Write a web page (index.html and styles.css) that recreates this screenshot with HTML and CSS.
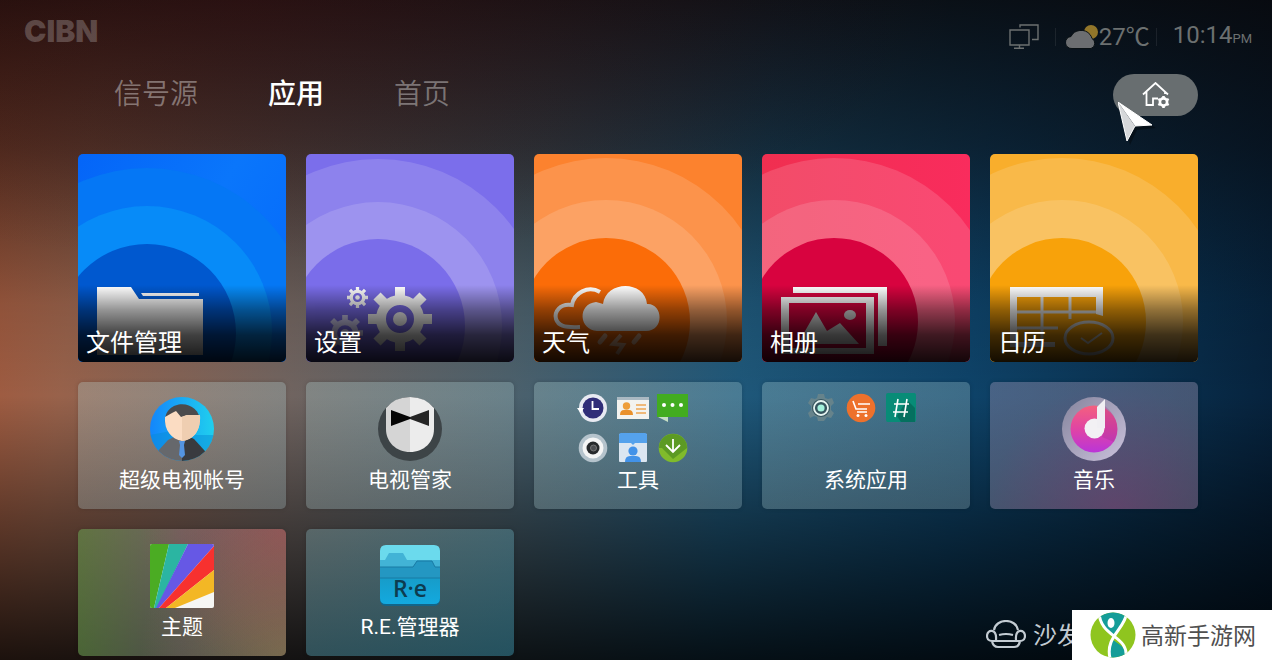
FILE: index.html
```html
<!DOCTYPE html>
<html lang="zh-CN">

<head>
    <meta charset="UTF-8" />
    <meta name="viewport" content="width=device-width, initial-scale=1.0" />
    <title>应用</title>
    <link rel="stylesheet" href="styles.css">
</head>

<body>
    <svg class="defs" width="0" height="0" aria-hidden="true">
        <symbol id="gear" viewBox="-32 -32 64 64">
            <path d="M0-32V-21M0 21V32M-32 0H-21M21 0H32M-23-23L-15-15M23-23L15-15M-23 23L-15 15M23 23L15 15" stroke="currentColor" stroke-width="10" fill="none" />
            <circle r="19" fill="none" stroke="currentColor" stroke-width="10" />
            <circle r="7" fill="currentColor" />
        </symbol>
    </svg>

    <header class="header">
        <div class="logo">CIBN</div>
        <div class="status">
            <svg class="icon-screens" width="30" height="26" viewBox="0 0 30 26" fill="none" stroke="currentColor" stroke-width="1.4">
                <path d="M1 6H20V21H1ZM10.500 21V24M5 24.300H15M11 3.500V1H29V15.500H23" />
            </svg>
            <span class="line"></span>
            <div class="weather">
                <svg width="33" height="26" viewBox="0 0 33 26">
                    <circle cx="25" cy="8" r="7" fill="#92762a" />
                    <path d="M6 24.500a6 6 0 0 1-1-12 11 10 0 0 1 19-2q1.500 2 2 4a5.500 5.500 0 0 1-1 10Z" fill="#6c6e71" stroke="#091013" stroke-width="1" />
                </svg>
                <span>27℃</span>
            </div>
            <span class="line"></span>
            <div class="clock">10:14<small>PM</small></div>
        </div>
    </header>

    <nav class="nav">
        <a href="#">信号源</a>
        <a href="#" class="active">应用</a>
        <a href="#">首页</a>
        <button class="btn-home" aria-label="桌面设置">
            <svg width="28" height="26" viewBox="0 0 28 26" fill="none" stroke="#fff" stroke-width="1.8">
                <path d="M1 12.500L13.500 1L26 12.500M4.500 10V23H11V16.500H16M23 10V12" />
                <circle cx="21.500" cy="20" r="3.600" stroke-width="2.600" />
                <path d="M21.500 14V16M21.500 24V26M16.300 17L18 18M25 22L26.700 23M16.300 23L18 22M25 18L26.700 17" stroke-width="2.600" />
            </svg>
        </button>
        <svg class="cursor" width="40" height="44" viewBox="0 0 40 44">
            <path d="M2 3L38 26L19 28L12 43Z" fill="#000" opacity=".35" />
            <path d="M0 0L34 23L17 24Z" fill="#fff" />
            <path d="M0 0L17 24L9 39Z" fill="#d6d8da" />
            <path d="M0 0L34 23L17 24L9 39Z" fill="none" stroke="#fff" stroke-width="1" />
        </svg>
    </nav>

    <main class="grid">
        <a href="#" class="tile blue">
            <svg class="art" viewBox="0 0 208 208">
                <circle class="c1" cx="69" cy="179" r="165" />
                <circle class="c2" cx="69" cy="177" r="125" />
                <circle class="c3" cx="69" cy="179" r="89" />
                <path d="M19 133H53L61 145H125V201H19ZM63 139H121V142H65Z" fill="#fff" />
            </svg>
            <span class="name">文件管理</span>
        </a>
        <a href="#" class="tile purple">
            <svg class="art" viewBox="0 0 208 208">
                <circle class="c1" cx="72" cy="172" r="167" />
                <circle class="c2" cx="72" cy="172" r="124" />
                <circle class="c3" cx="72" cy="172" r="87" />
                <g color="#fff">
                    <use href="#gear" x="62" y="133" width="64" height="64" />
                    <use href="#gear" x="41" y="133" width="21" height="21" />
                    <use href="#gear" x="21" y="161" width="36" height="36" opacity=".7" />
                </g>
            </svg>
            <span class="name">设置</span>
        </a>
        <a href="#" class="tile orange">
            <svg class="art" viewBox="0 0 208 208">
                <circle class="c1" cx="72" cy="168" r="164" />
                <circle class="c2" cx="72" cy="167" r="121" />
                <circle class="c3" cx="72" cy="168" r="84" />
                <path d="M66 138C54 131 40 139 38 151C26 149 20 158 22 165C24 171 29 174 46 173" fill="none" stroke="#fff" stroke-width="4" />
                <path d="M63 177C45 176 43 150 62 148Q66 149 69 150C72 126 111 126 113 150C129 149 131 177 112 177Z" fill="#fff" />
                <path d="M71 182L66 188M105 182L100 188" stroke="#fff" stroke-width="5" stroke-linecap="round" opacity=".6" />
                <path d="M87 181L79 190L89 191L83 200" fill="none" stroke="#fff" stroke-width="4" opacity=".6" />
            </svg>
            <span class="name">天气</span>
        </a>
        <a href="#" class="tile red">
            <svg class="art" viewBox="0 0 208 208">
                <circle class="c1" cx="72" cy="168" r="164" />
                <circle class="c2" cx="72" cy="167" r="121" />
                <circle class="c3" cx="72" cy="168" r="84" />
                <path d="M31 133H125V192H116V139H31ZM19 143H112V200H19ZM27 149V194H104V149Z" fill="#fff" fill-rule="evenodd" />
                <path d="M39 184L54 158L65 177L78 169L97 190H39Z" fill="#ddd" />
                <ellipse cx="88" cy="161" rx="6" ry="5" fill="#ddd" />
            </svg>
            <span class="name">相册</span>
        </a>
        <a href="#" class="tile yellow">
            <svg class="art" viewBox="0 0 208 208">
                <circle class="c1" cx="72" cy="168" r="164" />
                <circle class="c2" cx="72" cy="167" r="121" />
                <circle class="c3" cx="72" cy="168" r="84" />
                <path d="M20 133H113V162L106 160V143H27V188H65V193H20Z" fill="#fff" />
                <path d="M52 143V190M80 143V165M27 158H106M27 174H68" fill="none" stroke="#ddd" stroke-width="3" />
                <ellipse cx="99" cy="184" rx="24" ry="16" fill="none" stroke="#ddd" stroke-width="3" />
                <path d="M91 184L98 189L112 179" fill="none" stroke="#ddd" stroke-width="2" />
            </svg>
            <span class="name">日历</span>
        </a>

        <a href="#" class="app">
            <svg class="app-icon" viewBox="0 0 64 64">
                <defs>
                    <linearGradient id="sky" x1="0" x2="1">
                        <stop offset="0" stop-color="#1386fb" />
                        <stop offset="1" stop-color="#20cfee" />
                    </linearGradient>
                    <clipPath id="round"><circle cx="32" cy="32" r="32" /></clipPath>
                </defs>
                <g clip-path="url(#round)">
                    <rect width="64" height="64" fill="url(#sky)" />
                    <path d="M0 38L32 32L8 56L0 50ZM64 38L36 38L56 54L64 48Z" fill="#078bd5" opacity=".5" />
                    <path d="M32 36L18 43L8 54V64H32Z" fill="#66686c" />
                    <path d="M32 36L44 42L55 54V64H32Z" fill="#393b3f" />
                    <path d="M15 26C13 1 51 1 50 26L44 30H20Z" fill="#4b4b4d" />
                    <path d="M15 20L22 16L26 14L31 20L37 18H50C51 34 43 43 32 44C22 42 14 34 15 20Z" fill="#fbdcc2" />
                    <path d="M32 20L37 18H50C51 34 43 43 32 44Z" fill="#efceb1" />
                    <path d="M29 44H35L34 48L35 58L32 61L29 58L30 48Z" fill="#5494e0" />
                </g>
            </svg>
            <span class="app-name">超级电视帐号</span>
        </a>
        <a href="#" class="app">
            <svg class="app-icon" viewBox="0 0 64 64">
                <circle cx="32" cy="32" r="32" fill="#3d4447" />
                <path d="M8 11Q17 0 32 0V55C18 55 8 45 8 32Z" fill="#d5d5d5" />
                <path d="M56 11Q47 0 32 0V55C46 55 56 45 56 32Z" fill="#ececec" />
                <path d="M13 13L32 20V22L13 29Z" fill="#050505" />
                <path d="M51 13L32 20V22L51 29Z" fill="#262626" />
            </svg>
            <span class="app-name">电视管家</span>
        </a>
        <a href="#" class="app">
            <span class="folder">
                <svg viewBox="0 0 30 30">
                    <circle cx="15" cy="15" r="14" fill="#e8eaf2" />
                    <circle cx="15" cy="15" r="10.500" fill="#302d78" />
                    <path d="M14.500 8V16H21" fill="none" stroke="#fff" stroke-width="1.800" />
                    <path d="M-1 15H6L2.500 20Z" fill="#fff" />
                </svg>
                <svg viewBox="0 0 30 30">
                    <path d="M-1 4H31V26H-1Z" fill="#f3f3ef" />
                    <path d="M-1 4H31V7H-1Z" fill="#aab9c2" />
                    <circle cx="8.500" cy="13" r="3.700" fill="#ee9e3a" />
                    <path d="M2 22Q2 17 6 17H11Q15 17 15 22Z" fill="#e9912c" />
                    <path d="M18 12H28M18 16H28M18 20H28" stroke="#eea653" stroke-width="1.500" />
                </svg>
                <svg viewBox="0 0 30 30">
                    <path d="M0 24H10V29Z" fill="#c6dfc5" />
                    <path d="M-1 1H30V24H-1Z" fill="#42ac20" />
                    <circle cx="6" cy="12" r="2" fill="#fff" />
                    <circle cx="14.500" cy="12" r="2" fill="#fff" />
                    <circle cx="23" cy="12" r="2" fill="#fff" />
                </svg>
                <svg viewBox="0 0 30 30">
                    <circle cx="15" cy="15" r="14.300" fill="#b5c3cc" />
                    <circle cx="15" cy="15" r="10.500" fill="#f5f5f5" />
                    <circle cx="15" cy="15" r="6.500" fill="#27292b" />
                    <circle cx="15.500" cy="15" r="3" fill="#4c4d50" stroke="#777" />
                </svg>
                <svg viewBox="0 0 30 30">
                    <rect x="1" y="1" width="28" height="28" rx="1" fill="#dbe6f1" />
                    <path d="M1 2Q1 0 3 0H27Q29 0 29 2V10H17L15 12L13 10H1Z" fill="#55a2ec" />
                    <circle cx="15" cy="18" r="4.600" fill="#4292e8" />
                    <path d="M7 29Q7 23 12 23H18Q23 23 23 29Z" fill="#4292e8" />
                </svg>
                <svg viewBox="0 0 30 30">
                    <circle cx="15" cy="15" r="14.300" fill="#80bb2b" />
                    <path d="M1 15A14 14 0 0 1 29 15L15 26L4 15Z" fill="#5c9a24" />
                    <path d="M15 6V18M8 12L15 19L22 12" fill="none" stroke="#fff" stroke-width="1.800" />
                </svg>
            </span>
            <span class="app-name">工具</span>
        </a>
        <a href="#" class="app">
            <span class="folder">
                <svg viewBox="0 0 30 30">
                    <path d="M12 1H18L19 5L22 6L26 5L28 10L25 13V17L28 20L25 25L21 24L18 28H12L11 24L8 23L4 25L2 20L5 17V13L2 10L5 5L9 6L11 5Z" fill="#66838b" />
                    <circle cx="15" cy="15" r="9" fill="#35545e" />
                    <circle cx="15" cy="15" r="7" fill="none" stroke="#e4f2ef" stroke-width="1.800" />
                    <circle cx="15" cy="15" r="3.600" fill="#a3f0db" />
                </svg>
                <svg viewBox="0 0 30 30">
                    <circle cx="15" cy="15" r="14.300" fill="#ed712c" />
                    <path d="M7 8L10 16H21M12 11H24M11 19H21" fill="none" stroke="#fff" stroke-width="1.600" />
                    <circle cx="12" cy="22.500" r="1.500" fill="#fff" />
                    <circle cx="20" cy="22.500" r="1.500" fill="#fff" />
                </svg>
                <svg viewBox="0 0 30 30">
                    <rect y="0" width="30" height="29" rx="2" fill="#088c77" />
                    <path d="M21 7L29 15V29H15L11 23Z" fill="#05705f" />
                    <path d="M12 6L9 24M21 6L18 24M8 11H23M7 19H22" stroke="#fff" stroke-width="1.600" />
                </svg>
            </span>
            <span class="app-name">系统应用</span>
        </a>
        <a href="#" class="app music">
            <svg class="app-icon" viewBox="0 0 64 64">
                <defs>
                    <linearGradient id="disc" x1="0" x2="0" y1="0" y2="1">
                        <stop offset="0" stop-color="#f4607e" />
                        <stop offset=".5" stop-color="#e044a4" />
                        <stop offset="1" stop-color="#ba35d8" />
                    </linearGradient>
                    <linearGradient id="rim" x1="0" x2="1" y1="0" y2="1">
                        <stop offset="0" stop-color="#85849c" />
                        <stop offset="1" stop-color="#cbc2dc" />
                    </linearGradient>
                </defs>
                <circle cx="32" cy="32" r="32" fill="url(#rim)" />
                <circle cx="32" cy="32" r="23.500" fill="url(#disc)" />
                <path d="M43 9V31L40 40L52 45Q56 38 55 28Q53 17 43 9Z" fill="#a32e91" opacity=".3" />
                <circle cx="32.500" cy="31.500" r="10" fill="#f2f1f4" />
                <path d="M35 10L43 2V31H35Z" fill="#f0eff3" />
            </svg>
            <span class="app-name">音乐</span>
        </a>
        <a href="#" class="app theme">
            <svg class="app-icon" viewBox="0 0 64 64">
                <defs><clipPath id="square"><rect width="64" height="64" rx="2" /></clipPath></defs>
                <g clip-path="url(#square)">
                    <rect width="64" height="64" fill="#f6f6f4" />
                    <path d="M0 0H19L4 64H0Z" fill="#4bac23" />
                    <path d="M19 0H38L7 64H4Z" fill="#2bb5a2" />
                    <path d="M38 0H64V2L9 64H6Z" fill="#6658e5" />
                    <path d="M64 2V26L16 64H9Z" fill="#f7312f" />
                    <path d="M64 26V48L25 64H16Z" fill="#f3b725" />
                </g>
            </svg>
            <span class="app-name">主题</span>
        </a>
        <a href="#" class="app manager">
            <svg class="app-icon" viewBox="0 0 64 64">
                <defs>
                    <linearGradient id="front" x1="0" x2="0" y1="0" y2="1">
                        <stop offset="0" stop-color="#179cc9" />
                        <stop offset="1" stop-color="#13a9df" />
                    </linearGradient>
                </defs>
                <rect x="2" y="2" width="60" height="60" rx="6" fill="#126589" />
                <path d="M2 7Q2 1 8 1H56Q62 1 62 7V17H2Z" fill="#6bdaed" />
                <path d="M2 16H7L11 9H25L29 16H62V34H2Z" fill="#42b3d6" />
                <path d="M2 23H35L39 17H54L57 23H62V34H2Z" fill="#2497c2" />
                <path d="M2 34H62V54Q62 60 56 60H8Q2 60 2 54Z" fill="url(#front)" />
                <path d="M2 23H35L39 17H54L57 23H62M2 34H62" fill="none" stroke="#197aa4" />
                <text class="re" x="32" y="53" text-anchor="middle">R·e</text>
            </svg>
            <span class="app-name">R.E.管理器</span>
        </a>
    </main>

    <footer class="marks">
        <svg width="40" height="30" viewBox="0 0 40 30" fill="none" stroke="currentColor" stroke-width="2.200">
            <path d="M8 10C10-2 30-2 32 10M10 20C11 8 1 9 1 16C1 21 6 21 6 21Q7 27 12 27H28Q33 27 34 21C34 21 39 21 39 16C39 9 29 8 30 20M13 15Q20 13 27 15M6 21H34" />
        </svg>
        <span class="shafa">沙发</span>
        <div class="badge">
            <svg width="46" height="46" viewBox="0 0 46 46">
                <defs><clipPath id="ball"><circle cx="23" cy="23" r="22.500" /></clipPath></defs>
                <g clip-path="url(#ball)">
                    <rect width="46" height="46" fill="#8fc51f" />
                    <path d="M9 0H36C35 10 29 17 23 23C15 18 9 10 9 0ZM23 28C32 34 39 38 33 46H20C18 39 19 33 23 28Z" fill="#159d98" />
                    <path d="M9 0C10 26 39 23 36 46M37 0C35 17 15 25 20 46" fill="none" stroke="#fff" stroke-width="3" />
                    <ellipse cx="21" cy="11" rx="3.500" ry="5" fill="#fff" />
                </g>
            </svg>
            <span>高新手游网</span>
        </div>
    </footer>
</body>

</html>
```
FILE: styles.css
```css
* {
    box-sizing: border-box;
    margin: 0;
    padding: 0;
}

body {
    font-family: Roboto, "Noto Sans CJK SC", sans-serif;
    min-height: 100vh;
    overflow: hidden;
    position: relative;
    color: #fff;
    background:
        radial-gradient(ellipse 55% 40% at 20% 0, rgba(80, 10, 15, 0.28), transparent),
        linear-gradient(rgba(8, 5, 6, 0.84) 0%, rgba(8, 5, 6, 0.55) 22%, rgba(0, 0, 0, 0.1) 46%, rgba(0, 0, 0, 0) 60%, rgba(0, 0, 0, 0.38) 78%, rgba(0, 0, 0, 0.82) 100%),
        linear-gradient(97deg, #a3573a 0%, #98624b 8%, #72645f 24%, #4d616c 41%, #1f587a 58%, #0e4369 75%, #082b48 92%, #061f38 100%);
}

a {
    color: inherit;
    text-decoration: none;
}

.defs {
    position: absolute;
}

.header {
    display: flex;
    justify-content: space-between;
    padding: 14px 20px 0 24px;
    height: 60px;
}

.logo {
    font-family: Inter, sans-serif;
    font-size: 30px;
    font-weight: 900;
    line-height: 34px;
    color: rgba(255, 255, 255, 0.22);
}

.status {
    display: flex;
    align-items: center;
    gap: 16px;
    color: #6c7070;
    font-size: 24px;
    line-height: 28px;
}

.line {
    width: 1px;
    height: 18px;
    background: rgba(255, 255, 255, 0.08);
}

.weather {
    display: flex;
    align-items: center;
    margin-left: -6px;
    margin-right: -10px;
}

.clock small {
    font-size: 13px;
}

.nav {
    display: flex;
    align-items: center;
    gap: 70px;
    position: relative;
    margin: 14px 74px 0 114px;
    height: 42px;
    font-size: 28px;
    line-height: 38px;
    font-weight: 350;
    color: rgba(255, 255, 255, 0.38);
}

.nav .active {
    color: #fff;
    font-weight: 500;
}

.btn-home {
    display: flex;
    align-items: center;
    justify-content: center;
    width: 85px;
    height: 42px;
    margin-left: auto;
    border: none;
    border-radius: 21px;
    background: #686e70;
    cursor: pointer;
}

.cursor {
    position: absolute;
    right: 40px;
    top: 28px;
}

.grid {
    display: grid;
    grid-template-columns: repeat(5, 1fr);
    gap: 20px;
    padding: 38px 74px 4px 78px;
}

.tile {
    display: flex;
    align-items: flex-end;
    aspect-ratio: 1;
    position: relative;
    border-radius: 5px;
    overflow: hidden;
}

.tile::after {
    content: "";
    position: absolute;
    inset: 0;
    background: linear-gradient(transparent 63%, rgba(0, 0, 0, 0.42) 75%, rgba(0, 0, 0, 0.75) 87%, rgba(0, 0, 0, 0.92) 100%);
}

.art {
    position: absolute;
    width: 100%;
    height: 100%;
}

.name {
    position: relative;
    z-index: 1;
    padding: 0 8px 2px;
    font-size: 24px;
    line-height: 34px;
}

.c1, .c2 {
    fill: rgba(255, 255, 255, 0.14);
}

.blue {
    background: linear-gradient(120deg, #0465f8, #0a76fb 50%, #0468fb);
}

.blue .c1 {
    fill: #0577f5;
}

.blue .c2 {
    fill: #078bf8;
}

.blue .c3 {
    fill: #0058cf;
}

.purple {
    background: #7b6eeb;
}

.purple .c3 {
    fill: #7a6dea;
}

.orange {
    background: #fc822e;
}

.orange .c3 {
    fill: #fb6c08;
}

.red {
    background: linear-gradient(90deg, #f02f50, #f92c5d);
}

.red .c3 {
    fill: #d8033f;
}

.yellow {
    background: #f9ae2c;
}

.yellow .c3 {
    fill: #f8a20a;
}

.app {
    display: flex;
    flex-direction: column;
    align-items: center;
    height: 127px;
    border-radius: 5px;
    background: linear-gradient(160deg, rgba(176, 210, 210, 0.3), rgba(176, 205, 210, 0.28));
    box-shadow: 0 0 4px rgba(0, 0, 0, 0.15);
}

.music {
    background: radial-gradient(circle at 60% 100%, rgba(180, 105, 160, 0.5), rgba(160, 150, 180, 0.4) 70%);
}

.theme {
    background:
        radial-gradient(circle at 100% 0, rgba(190, 70, 75, 0.45), transparent 60%),
        radial-gradient(circle at 100% 100%, rgba(160, 145, 80, 0.45), transparent 60%),
        linear-gradient(90deg, rgba(105, 155, 80, 0.6), rgba(150, 150, 150, 0.45) 50%);
}

.manager {
    background: linear-gradient(160deg, rgba(130, 170, 175, 0.4), rgba(60, 150, 175, 0.48));
}

.app-icon {
    width: 64px;
    height: 64px;
    margin: 15px 0 4px;
}

.app-name {
    font-size: 21px;
    line-height: 30px;
}

.folder {
    display: grid;
    grid-template-columns: repeat(3, 30px);
    grid-template-rows: 30px 30px;
    gap: 10px;
    margin: 11px 10px 2px 0;
}

.folder svg {
    overflow: visible;
}

.re {
    font-family: "Open Sans", sans-serif;
    font-size: 23px;
    font-weight: 600;
    fill: #0d3c50;
}

.marks {
    display: flex;
    align-items: center;
    position: absolute;
    right: 0;
    bottom: 0;
    height: 50px;
    color: #c3cbd2;
}

.shafa {
    margin-left: 7px;
    padding-bottom: 4px;
    font-size: 24px;
}

.badge {
    display: flex;
    align-items: center;
    gap: 5px;
    position: relative;
    width: 200px;
    height: 50px;
    margin-left: -9px;
    padding-left: 18px;
    background: #fff;
    color: #505050;
    font-size: 23px;
}

.badge span {
    padding-bottom: 2px;
}
```
